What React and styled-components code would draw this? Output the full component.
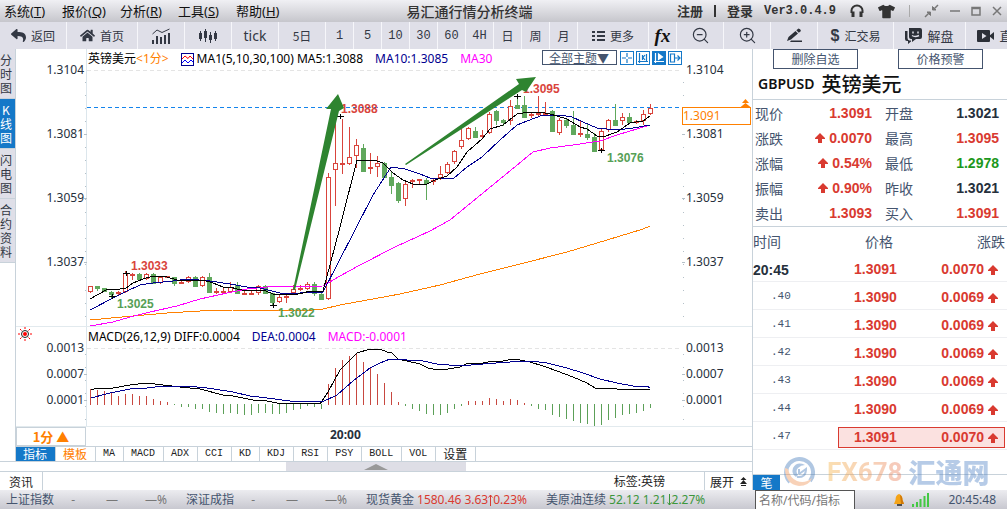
import { styled, createGlobalStyle } from "styled-components";
import { FaReply, FaHome, FaTshirt } from "react-icons/fa";
import { ZoomIn, ZoomOut } from "lucide-react";

const uiFont = `"Noto Sans", "Noto Sans CJK SC", sans-serif`;
const cnFont = `"Noto Sans CJK SC", sans-serif`;
const monoFont = `"Liberation Mono", "Noto Sans CJK SC", monospace`;
const numFont = `"Liberation Sans", "Noto Sans CJK SC", sans-serif`;

const red = "#d93a30";
const green = "#1c981c";
const dark = "#26303c";
const slate = "#44546e";
const blue = "#1478c8";
const orange = "#ff8000";
const line = "#c8d2da";

const GlobalStyle = createGlobalStyle`
  * {
    box-sizing: border-box;
  }
  body {
    margin: 0;
    background: white;
    font-family: ${uiFont};
    font-size: 12px;
    overflow: hidden;
  }
  button, select, input {
    font: inherit;
    color: inherit;
    margin: 0;
    padding: 0;
    border: 0;
    border-radius: 0;
    background: none;
  }
  button {
    cursor: pointer;
    white-space: nowrap;
  }
  svg {
    display: block;
  }
`

const Page = styled.div`
  display: flex;
  flex-direction: column;
  min-height: 100vh;
  overflow: hidden;
`

/* ---------- title bar ---------- */

const TitleBar = styled.header`
  display: grid;
  grid-template-columns: 1fr auto 1fr;
  align-items: center;
  height: 22px;
  background: linear-gradient(#f0f0f4, #c6c6cc);
`

const MenuBar = styled.nav`
  display: flex;
  padding-left: 4px;
`

const MenuButton = styled.button`
  width: 58px;
  text-align: left;
  font-size: 13px;
  line-height: 20px;
  color: #111;
`

const AppTitle = styled.h1`
  margin: 0;
  padding-right: 68px;
  font: 500 14px/20px ${cnFont};
  color: #333;
`

const TitleTools = styled.div`
  display: flex;
  justify-content: flex-end;
  align-items: center;
  gap: ${(props) => props.$gap || "0"};
  padding-right: ${(props) => props.$pad || "0"};
  color: #333;
`

const TitleButton = styled.button`
  display: flex;
  align-items: center;
  font: 700 13px/20px ${cnFont};
  color: #333;
`

const Bar = styled.span`
  width: ${(props) => props.$w || "2px"};
  height: 12px;
  background: ${(props) => props.color || "#333"};
`

const Version = styled.span`
  font: 700 12px/20px ${monoFont};
`

/* ---------- toolbar ---------- */

const Toolbar = styled.div`
  display: flex;
  height: 27px;
  background: #dfdfe8;
  overflow: hidden;
`

const ToolButton = styled.button`
  display: flex;
  flex: none;
  align-items: center;
  justify-content: center;
  gap: 5px;
  width: ${(props) => props.$w};
  border-right: 1px solid #f6f6fa;
  font-family: ${(props) => props.$font || cnFont};
  font-size: ${(props) => props.$size || "12px"};
  color: #333844;
`

const Fx = styled.span`
  font: italic 700 19px/20px "Liberation Serif", serif;
  color: #111;
`

const Dollar = styled.span`
  font: 700 16px/20px ${numFont};
`

/* ---------- body ---------- */

const Body = styled.div`
  display: flex;
  flex: 1;
`

const LeftPart = styled.div`
  display: flex;
  flex-direction: column;
  flex: 1;
  min-width: 0;
`

const Workspace = styled.div`
  display: flex;
  border-bottom: 1px solid ${line};
`

const SideTabs = styled.nav`
  display: flex;
  flex-direction: column;
  width: 16px;
  border-right: 1px solid ${line};
`

const SideTab = styled.button`
  width: 15px;
  padding: 4px 3px 3px 0;
  border-bottom: 1px solid ${line};
  font: 12px/14px ${cnFont};
  white-space: normal;
  word-break: break-all;
  color: ${(props) => (props.$active ? "white" : "#333844")};
  background: ${(props) => (props.$active ? blue : "#dfdfe8")};
`

const ChartColumn = styled.main`
  flex: 1;
  min-width: 0;
`

const Panel = styled.section`
  display: flex;
  position: relative;
  height: ${(props) => props.$h};
  border-bottom: 1px solid #e2eaee;
`

const Legend = styled.div`
  position: absolute;
  top: 0;
  left: 72px;
  right: 70px;
  display: flex;
  align-items: center;
  gap: 12px;
  height: 20px;
  line-height: 18px;
  white-space: nowrap;
`

const LegendText = styled.span`
  color: ${(props) => props.color || "black"};
`

const LegendItem = styled.span`
  display: flex;
  align-items: center;
  gap: 3px;
`

const LegendTools = styled.div`
  display: flex;
  align-items: center;
  align-self: flex-start;
  gap: 2px;
  margin-left: auto;
  padding-top: 1px;
`

const ThemeSelect = styled.select`
  appearance: none;
  width: 75px;
  height: 15px;
  margin-right: 1px;
  padding-left: 6px;
  border: 1px solid ${slate};
  background: white;
  font: 12px/13px ${cnFont};
  color: ${slate};
`

const SmallTool = styled.button`
  width: 14px;
  height: 14px;
  border: 1px solid ${blue};
  color: ${(props) => (props.$active ? "white" : blue)};
  background: ${(props) => (props.$active ? blue : "white")};
`

const Axis = styled.div`
  display: flex;
  flex: none;
  flex-direction: column;
  width: ${(props) => props.$w};
  padding-top: ${(props) => props.$top};
  text-align: ${(props) => props.$align};
  color: ${dark};
`

const AxisLabel = styled.span`
  height: ${(props) => props.$step};
  line-height: 16px;
`

const Plot = styled.svg`
  flex: 1;
  min-width: 0;
  height: 100%;
`

const SunButton = styled.button`
  position: absolute;
  left: 2px;
  top: 0;
`

const PriceFlag = styled.div`
  position: absolute;
  right: 1px;
  top: 58px;
  width: 69px;
  height: 18px;
  border: 1px solid ${orange};
  background: white;
  line-height: 16px;
  color: ${orange};
`

const FlagArrows = styled.svg`
  position: absolute;
  right: -1px;
  top: -9px;
`

const TimeRow = styled.div`
  display: flex;
  height: 19px;
`

const PeriodButton = styled.button`
  width: 70px;
  border: 1px solid ${line};
  font: 700 13px/16px ${cnFont};
  color: ${orange};
`

const TimeLabel = styled.span`
  margin-left: 242px;
  padding-left: 2px;
  font: 700 12px/16px ${uiFont};
  color: ${dark};
`

const IndicatorTabs = styled.nav`
  display: flex;
  height: 15px;
  border-top: 1px solid ${line};
`

const IndicatorTab = styled.button`
  padding: 0 8px 0 7px;
  border-right: 1px solid ${line};
  font: ${(props) => (props.$cn ? `12px/14px ${cnFont}` : `10px/14px ${monoFont}`)};
  color: ${(props) => props.color || "#222"};
  background: ${(props) => props.$bg || "white"};
`

const Splitter = styled.div`
  display: flex;
  justify-content: center;
  height: 10px;
  border-bottom: 1px solid ${line};
`

const SplitterHandle = styled.button`
  display: flex;
  align-items: center;
  justify-content: center;
  width: 180px;
  background: #dedee6;
`

const NewsRow = styled.div`
  display: flex;
  flex: 1;
  align-items: center;
  min-height: 18px;
  color: #222;
`

const NewsTab = styled.button`
  display: flex;
  align-items: center;
  justify-content: center;
  gap: 6px;
  align-self: stretch;
  width: ${(props) => props.$w};
  border: solid ${line};
  border-width: ${(props) => props.$border};
  font-family: ${cnFont};
`

const TagText = styled.span`
  margin-left: auto;
  margin-right: 39px;
`

/* ---------- right panel ---------- */

const QuotePanel = styled.aside`
  position: relative;
  display: flex;
  flex-direction: column;
  flex: none;
  width: 255px;
  border-left: 1px solid ${line};
`

const PanelButtons = styled.div`
  display: flex;
  gap: 40px;
  padding-left: 20px;
`

const PanelButton = styled.button`
  width: 85px;
  height: 20px;
  border: 1px solid ${slate};
  font: 12px/16px ${cnFont};
  color: ${slate};
`

const SymbolRow = styled.h2`
  display: flex;
  align-items: center;
  gap: 7px;
  height: 31px;
  margin: 0;
  padding-left: 5px;
  border-bottom: 1px solid ${line};
  font: 600 14px/20px ${uiFont};
  color: #111;
`

const SymbolName = styled.span`
  font: 500 20px/24px ${cnFont};
`

const QuoteGrid = styled.dl`
  display: grid;
  grid-template-columns: 40px 77px 13px 40px auto;
  grid-auto-rows: 25px;
  align-items: center;
  margin: 0;
  padding: 0 8px 1px 2px;
  border-bottom: 1px solid ${line};
`

const QuoteLabel = styled.dt`
  grid-column: ${(props) => props.$col};
  font: 14px/20px ${cnFont};
  color: ${slate};
`

const QuoteValue = styled.dd`
  grid-column: ${(props) => props.$col};
  display: flex;
  justify-content: flex-end;
  align-items: center;
  gap: 4px;
  margin: 0;
  font: 700 14px/20px ${numFont};
  color: ${(props) => props.color};
`

const TickTable = styled.table`
  width: 100%;
  border-collapse: separate;
  border-spacing: 0;
  table-layout: fixed;
`

const TickHead = styled.th`
  width: ${(props) => props.$w};
  height: 27px;
  padding: ${(props) => props.$pad};
  text-align: ${(props) => props.$align};
  font: 14px/20px ${cnFont};
  color: ${slate};
`

const TimeCell = styled.td`
  height: 28px;
  padding: ${(props) => (props.$first ? "4px 0 0 0" : "0 0 0 18px")};
  border-bottom: 1px solid #eeeff2;
  font: ${(props) => (props.$first ? `700 14px/20px ${numFont}` : `11px/16px ${monoFont}`)};
  color: ${(props) => (props.$first ? dark : slate)};
`

const TradeCell = styled.td`
  padding: 0 2px 0 0;
  border-bottom: 1px solid #eeeff2;
`

const Trade = styled.div`
  display: flex;
  align-items: center;
  justify-content: space-between;
  height: 21px;
  margin-top: 4px;
  padding: 0 6px 0 15px;
  border: 1px solid ${(props) => (props.$hot ? red : "transparent")};
  background: ${(props) => (props.$hot ? "#fbe1e0" : "transparent")};
  font: 700 14px/19px ${numFont};
  color: ${red};
`

const Change = styled.span`
  display: flex;
  align-items: center;
  gap: 4px;
`

const PanelFoot = styled.div`
  margin-top: auto;
  height: 16px;
  border-top: 1px solid ${line};
`

const PenTab = styled.button`
  display: block;
  width: 27px;
  height: 15px;
  font: 12px/14px ${cnFont};
  color: white;
  background: ${blue};
`

const Watermark = styled.div`
  position: absolute;
  left: 30px;
  bottom: 0;
  display: flex;
  align-items: center;
  gap: 12px;
  height: 36px;
  opacity: 0.4;
  pointer-events: none;
`

const BrandLatin = styled.span`
  font: 700 26px/36px Roboto, sans-serif;
  background: linear-gradient(90deg, #f5b040, #e87858);
  background-clip: text;
  color: transparent;
`

const BrandCn = styled.span`
  margin-left: -6px;
  font: 900 27px/36px ${cnFont};
  color: #4c80c4;
`

/* ---------- status bar ---------- */

const StatusBar = styled.footer`
  display: flex;
  align-items: center;
  height: 19px;
  padding-left: 6px;
  background: linear-gradient(#ececf0, #c8c8d0);
`

const Ticker = styled.div`
  display: flex;
  flex: none;
  width: 180px;
  gap: 3px;
  line-height: 18px;
  white-space: nowrap;
  color: ${(props) => props.color};
`

const TickerName = styled.span`
  color: ${slate};
`

const TickerBlank = styled.span`
  width: ${(props) => props.$w};
  text-align: right;
`

const TickerMove = styled.span`
  display: flex;
  align-items: center;
`

const SearchInput = styled.input`
  width: 100px;
  height: 19px;
  margin-left: auto;
  padding-left: 3px;
  border: solid #555;
  border-width: 1px 1px 0 1px;
  background: white;
  &::placeholder {
    color: #777;
    opacity: 1;
  }
`

const StatusRight = styled.div`
  display: flex;
  align-items: center;
  gap: 8px;
  width: 152px;
  padding: 0 11px 0 39px;
  line-height: 18px;
  color: ${slate};
`

const Clock = styled.time`
  margin-left: auto;
`

/* ---------- data ---------- */

// [high, top, bottom, low, kind] in plot pixels, u = rise, d = fall
const candles = [
  [286, 286, 292, 292, "u"], [286, 286, 288, 290, "d"], [288, 288, 291, 291, "d"], [291, 292, 294, 297, "d"],
  [291, 292, 293, 294, "u"], [271, 273, 292, 292, "u"], [273, 274, 276, 279, "u"], [273, 274, 279, 280, "d"],
  [273, 274, 279, 279, "u"], [273, 274, 283, 283, "d"], [277, 277, 283, 283, "u"], [276, 276, 277, 277, "u"],
  [277, 277, 283, 285, "d"], [280, 282, 283, 283, "u"], [276, 277, 282, 282, "u"], [276, 277, 286, 286, "d"],
  [276, 277, 286, 286, "u"], [273, 277, 292, 292, "d"], [288, 291, 292, 293, "u"], [287, 291, 292, 293, "u"],
  [282, 287, 292, 292, "u"], [282, 285, 293, 293, "d"], [291, 293, 294, 294, "u"], [291, 293, 294, 294, "u"],
  [285, 286, 293, 294, "u"], [285, 286, 293, 293, "d"], [293, 293, 302, 305, "d"], [295, 297, 302, 302, "u"],
  [293, 296, 297, 302, "u"], [285, 289, 293, 294, "u"], [285, 288, 289, 290, "u"], [282, 284, 289, 289, "u"],
  [282, 284, 293, 295, "d"], [292, 294, 299, 299, "d"], [173, 177, 299, 299, "u"], [117, 163, 170, 205, "u"],
  [119, 163, 164, 173, "u"], [127, 157, 164, 164, "u"], [139, 145, 156, 167, "u"], [144, 148, 171, 171, "d"],
  [153, 167, 168, 173, "u"], [156, 163, 167, 176, "u"], [162, 163, 177, 177, "d"], [171, 177, 185, 193, "d"],
  [182, 183, 200, 202, "d"], [181, 184, 199, 205, "u"], [179, 180, 182, 187, "u"], [179, 179, 180, 183, "u"],
  [178, 180, 183, 199, "d"], [179, 180, 182, 184, "u"], [166, 174, 178, 179, "u"], [162, 164, 173, 173, "u"],
  [150, 151, 162, 163, "u"], [129, 140, 147, 148, "u"], [127, 128, 139, 139, "u"], [127, 131, 137, 137, "d"],
  [130, 135, 136, 137, "u"], [112, 114, 133, 133, "u"], [110, 111, 120, 124, "d"], [119, 120, 122, 125, "d"],
  [100, 106, 121, 124, "u"], [95, 105, 108, 108, "d"], [96, 105, 117, 117, "d"], [112, 114, 116, 117, "u"],
  [96, 113, 114, 115, "u"], [102, 113, 114, 114, "u"], [110, 111, 131, 131, "d"], [118, 120, 133, 134, "u"],
  [118, 120, 125, 127, "d"], [111, 125, 134, 134, "d"], [121, 133, 134, 136, "u"], [123, 134, 137, 139, "d"],
  [133, 137, 151, 151, "d"], [129, 131, 150, 151, "u"], [119, 120, 130, 131, "u"], [104, 120, 125, 125, "d"],
  [113, 117, 121, 124, "u"], [113, 117, 122, 122, "d"], [120, 121, 122, 123, "u"], [110, 114, 121, 124, "u"],
  [104, 108, 114, 114, "u"],
];

// bar heights around the zero line
const macdBars = [
  16, 15, 14, 12, 9, 11, 11, 9, 9, 6, 4, 3, -1, -3, -3, -5, -5, -8, -9, -10, -9, -10, -11, -11, -9, -9, -10, -10,
  -9, -6, -5, -2, -3, -5, 21, 37, 45, 49, 52, 43, 37, 31, 22, 13, 3, -2, -5, -7, -10, -11, -11, -9, -5, -2, 4, 4,
  4, 7, 6, 4, 6, 5, 2, -2, -5, -6, -11, -13, -15, -17, -19, -20, -22, -21, -16, -14, -11, -10, -9, -7, -4,
];

const averages = [
  ["#ff8000", "90,320 133,316 167,313 200,311 233,310 313,310 323,309 340,305 400,294 440,285 480,274 520,264 567,252 607,240 643,229 650,226"],
  ["#ff00ff", "90,326 113,322 130,317 150,312 177,306 200,299 227,293 247,289 267,287 323,286 340,276 360,265 395,247 430,231 450,220 483,193 533,152 550,148 573,145 600,141 617,135 650,125"],
  ["#000090", "90,310 113,298 127,291 140,285 153,283 173,281 188,279 210,281 230,284 247,287 260,288 280,293 300,293 323,292 337,265 373,195 391,167 405,169 420,174 430,178 453,179 467,167 482,157 500,140 517,125 527,121 543,115 560,115 572,117 583,122 597,128 617,130 633,128 650,125"],
  ["#000", "90,299 106,290 120,289 126,288 133,283 143,279 153,276 167,277 177,280 203,280 213,283 223,287 230,287 237,289 247,291 258,290 266,291 273,294 293,295 303,293 310,291 323,291 330,265 340,227 357,160 377,161 383,163 393,173 403,180 413,184 427,184 435,180 447,176 457,167 467,152 482,139 490,129 503,125 517,114 530,112 540,112 550,114 567,119 580,127 587,129 597,136 603,137 617,132 630,123 643,121 650,116"],
];

const macdLines = [
  ["#000", "91,390 97,388 113,388 130,385 147,383 163,385 180,387 200,389 223,395 233,396 253,400 267,401 277,403 287,404 303,403 320,404 328,392 340,370 357,353 370,349 380,349 387,352 392,353 398,359 420,364 428,368 438,370 448,369 460,367 468,363 483,363 493,361 503,361 513,359 520,360 530,362 543,366 557,371 573,377 587,383 595,388 602,389 610,388 617,389 630,389 637,390 650,389"],
  ["#000090", "91,398 110,393 130,389 147,388 163,386 187,386 207,388 233,392 250,396 267,398 290,401 307,401 322,402 337,395 353,381 370,368 380,363 390,359 407,360 423,361 437,364 460,366 483,364 510,362 530,361 547,363 567,368 583,373 600,379 617,383 633,386 647,386 650,388"],
];

const marks = [
  [131, 270, "1.3033", "#d9443c"],
  [117, 308, "1.3025", "#56a056"],
  [278, 317, "1.3022", "#56a056"],
  [341, 113, "1.3088", "#d9443c"],
  [523, 93, "1.3095", "#d9443c"],
  [607, 162, "1.3076", "#56a056"],
];

const crosses = [[126, 273], [112, 296], [273, 305], [340, 116], [517, 96], [601, 150]];

const quotes = [
  ["现价", "1.3091", red, false, "开盘", "1.3021", dark],
  ["涨跌", "0.0070", red, true, "最高", "1.3095", red],
  ["涨幅", "0.54%", red, true, "最低", "1.2978", green],
  ["振幅", "0.90%", red, true, "昨收", "1.3021", dark],
  ["卖出", "1.3093", red, false, "买入", "1.3091", red],
];

const ticks = [
  ["20:45", "1.3091", "0.0070"],
  [".40", "1.3090", "0.0069"],
  [".41", "1.3090", "0.0069"],
  [".42", "1.3090", "0.0069"],
  [".43", "1.3090", "0.0069"],
  [".44", "1.3090", "0.0069"],
  [".47", "1.3091", "0.0070"],
];

const menus = [["系统", "T"], ["报价", "Q"], ["分析", "R"], ["工具", "S"], ["帮助", "H"]];
const periods = ["1", "5", "10", "30", "60", "4H", "日", "周", "月"];
const indicators = ["MA", "MACD", "ADX", "CCI", "KD", "KDJ", "RSI", "PSY", "BOLL", "VOL"];
const prices = ["1.3104", "1.3081", "1.3059", "1.3037"];
const macdScale = ["0.0013", "0.0007", "0.0001"];

/* ---------- icons ---------- */

const UpArrow = () => (
  <svg width="10" height="10" viewBox="0 0 10 10" fill={red}>
    <path d="M5 0L10 5V6H7V10H3V6H0V5Z" />
  </svg>
)

const ThinArrow = ({ d }) => (
  <svg width="5" height="12" viewBox="0 0 5 12" fill="none" stroke="currentColor">
    <path d={d} />
  </svg>
)

const HeadphoneIcon = () => (
  <svg width="14" height="14" viewBox="0 0 14 14" fill="none" stroke="#333" strokeWidth="2">
    <path d="M1.500 9V6.500A5.500 5 0 0 1 12.500 6.500V9" />
    <path d="M3 7.500V13M11 7.500V13" strokeWidth="3" />
  </svg>
)

const CollapseIcon = () => (
  <svg width="15" height="14" viewBox="0 0 15 14" fill="#777" stroke="#777">
    <path d="M14 1L10 5M1 13L5 9" strokeWidth="1.500" />
    <path d="M8.500 2.500V6H12ZM6.500 11.500V8H3Z" />
  </svg>
)

const WindowIcon = ({ d }) => (
  <svg width="10" height="10" viewBox="0 0 10 10" fill="none" stroke="#777" strokeWidth="1.500">
    <path d={d} />
  </svg>
)

const TrendIcon = () => (
  <svg width="20" height="16" viewBox="0 0 20 16" fill="none" stroke="#333844">
    <path d="M1.500 6L6 2L11 4.500L18.500 1" />
    <path d="M2 16V12M6 16V8M10 16V9M14 16V7M18 16V5" strokeWidth="2" />
  </svg>
)

const CandleIcon = () => (
  <svg width="20" height="16" viewBox="0 0 20 16" stroke="#333844">
    <path d="M2.500 3V13M7.500 1V14M12.500 4V15M17.500 3V13" />
    <path d="M2.500 5V11M7.500 3V10M12.500 7V12M17.500 5V11" strokeWidth="3" />
  </svg>
)

const ListIcon = () => (
  <svg width="13" height="12" viewBox="0 0 13 12" stroke="#333844" strokeWidth="2">
    <path d="M0 2H3M5 2H13M0 6H3M5 6H13M0 10H3M5 10H13" />
  </svg>
)

const PenIcon = () => (
  <svg width="17" height="15" viewBox="0 0 17 15" fill="#2c3038">
    <path d="M1 13L2.500 9L9.500 3L12 5.500L5 11.500ZM10.300 2.300L12.500 .5Q14.500 .5 15 3L12.800 4.800Z" />
    <path d="M5 12.500H16V14H4Z" />
  </svg>
)

const ChatIcon = () => (
  <svg width="17" height="16" viewBox="0 0 17 16" fill="#2c3038">
    <path d="M4 0H15Q17 0 17 2V9Q17 11 15 11H11L7 14V11H6Q4 11 4 9Z" />
    <path d="M2.500 3H0V11Q0 13 2 13H3V16L6 13.500V12.500H4.500Q2.500 12 2.500 10Z" />
    <path d="M8 3.500V5.500M13 3.500V5.500M7 7.500Q10 9.500 14 7.500" stroke="#dfdfe8" fill="none" strokeWidth="1.500" />
  </svg>
)

const VideoIcon = () => (
  <svg width="17" height="12" viewBox="0 0 17 12" fill="#2c3038">
    <rect width="13" height="12" rx="1" />
    <path d="M12 6L17 2V10Z" />
    <path d="M5 3V9L9.500 6Z" fill="#dfdfe8" />
  </svg>
)

const WaveIcon = () => (
  <svg width="13" height="13" viewBox="0 0 13 13" fill="none">
    <rect x=".5" y=".5" width="12" height="12" fill="white" stroke="#000090" />
    <path d="M1 6L4 3L7 5.500L9 3L12 6" stroke="red" />
    <path d="M1 10L4 7L7 10L10 7L12 9" stroke="blue" />
  </svg>
)

const ToolGlyph = ({ d, fill }) => (
  <svg width="12" height="12" viewBox="0 0 12 12" fill={fill || "none"} stroke="currentColor" strokeWidth="1.200">
    <path d={d} />
  </svg>
)

const SunIcon = () => (
  <svg width="14" height="14" viewBox="0 0 14 14" fill="none" stroke="red">
    <path d="M7 0V2M7 12V14M0 7H2M12 7H14M2 2L3.500 3.500M10.500 10.500L12 12M2 12L3.500 10.500M10.500 3.500L12 2" />
    <circle cx="7" cy="7" r="3.500" stroke="#222" />
    <circle cx="7" cy="7" r="2" fill="red" stroke="none" />
  </svg>
)

const BellIcon = () => (
  <svg width="10" height="12" viewBox="0 0 10 12">
    <path d="M5 0Q8.500 1 8.500 6L10 10H0L1.500 6Q1.500 1 5 0Z" fill="#f5a418" />
    <path d="M6 1Q8.500 2 8.500 6L10 10H7Z" fill="#d07808" />
    <path d="M3 11H8" stroke="#222" strokeWidth="1.500" />
  </svg>
)

const SignalIcon = () => (
  <svg width="17" height="14" viewBox="0 0 17 14" stroke="#44c844" strokeWidth="2">
    <path d="M1 14V11M5 14V9M8.500 14V6M12.500 14V3M16 14V0" />
  </svg>
)

const BrandLogo = () => (
  <svg width="32" height="32" viewBox="0 0 32 32" fill="none">
    <path d="M7 26A13.500 13.500 0 1 1 27 25" stroke="#3c74b8" strokeWidth="4" />
    <path d="M2 12Q2 28 16 30Q26 30 29 22Q22 28 14 25Q7 22 5 13Z" fill="#f09050" />
    <path d="M22 9Q14 5 10 12Q8 18 13 21L15 19Q12 15 15 12Q18 9 22 9Z" fill="#3c74b8" />
    <path d="M14 21Q23 22 23 13L16 18M16 13V18" stroke="#3c74b8" strokeWidth="2" />
  </svg>
)

/* ---------- charts ---------- */

const AxisDots = ({ from, to, x, major }) => {
  const dots = [];
  for (let y = from; y <= to; y += 13) {
    dots.push(<rect key={y} x={x} y={y} width="1" height="1" />);
  }
  return (
    <g fill="#b4c0c8">
      {dots}
      {major.map((y) => <rect key={`m${y}`} x={x - 1} y={y} width="3" height="1" />)}
    </g>
  )
}

const Candle = ({ index, data }) => {
  const [high, top, bottom, low, kind] = data;
  const x = 90 + index * 7;
  const color = kind === "u" ? "#d9443c" : "#60a85c";
  const hollow = kind === "u" && bottom - top > 1;
  return (
    <g stroke={color}>
      <path d={`M${x + 0.5} ${high}V${low + 1}`} />
      <rect
        x={x - 1.5}
        y={top + 0.5}
        width="4"
        height={Math.max(bottom - top - (hollow ? 1 : 0), 1)}
        fill={hollow ? "white" : color}
      />
    </g>
  )
}

const PriceChart = () => (
  <Plot viewBox="84 49 601 277" preserveAspectRatio="xMinYMin meet" shapeRendering="crispEdges">
    <path d="M86.500 49V327" stroke="#dce6ec" />
    <AxisDots from={82} to={320} x={85} major={[134, 198, 262]} />
    <AxisDots from={82} to={320} x={683} major={[134, 198, 262]} />
    <path d="M87 70.500H682" stroke="#e4e4e4" strokeDasharray="4 3" />
    <path d="M87 107.500H682" stroke="#1484ec" strokeDasharray="4 3" />
    {candles.map((data, index) => <Candle key={index} index={index} data={data} />)}
    {averages.map(([color, points]) => (
      <polyline key={color} points={points} fill="none" stroke={color} />
    ))}
    {crosses.map(([x, y]) => (
      <path key={x} d={`M${x - 3} ${y + 0.5}H${x + 4}M${x + 0.5} ${y - 2}V${y + 3}`} stroke="#000" />
    ))}
    {marks.map(([x, y, text, color]) => (
      <text key={text} x={x} y={y} fill={color} fontFamily="Liberation Sans" fontSize="12" fontWeight="700">
        {text}
      </text>
    ))}
    <g fill="#2e8430" shapeRendering="auto">
      <path d="M293 290L331 109L326 109L338 94L344 108L339 111L295 290Z" />
      <path d="M405 164L519 84L516 79L536 77L526 92L522 90L406 165Z" />
    </g>
  </Plot>
)

const MacdChart = () => (
  <Plot viewBox="84 327 601 99" preserveAspectRatio="xMinYMin meet" shapeRendering="crispEdges">
    <path d="M86.500 327V427" stroke="#dce6ec" />
    <AxisDots from={354} to={424} x={85} major={[374, 400]} />
    <AxisDots from={354} to={424} x={683} major={[374, 400]} />
    <path d="M87 348.500H682" stroke="#e4e4e4" strokeDasharray="4 3" />
    {macdBars.map((h, index) => (
      <path
        key={index}
        d={`M${90.5 + index * 7} ${404 + (h > 0 ? 1 : 0)}v${-h}`}
        stroke={h > 0 ? "#c84840" : "#5ca058"}
      />
    ))}
    {macdLines.map(([color, points]) => (
      <polyline key={color} points={points} fill="none" stroke={color} />
    ))}
  </Plot>
)

const Scale = ({ labels, step, ...rest }) => (
  <Axis {...rest}>
    {labels.map((label) => <AxisLabel key={label} $step={step}>{label}</AxisLabel>)}
  </Axis>
)

/* ---------- page ---------- */

const App = () => (
  <Page>
    <GlobalStyle />
    <TitleBar>
      <MenuBar>
        {menus.map(([name, key]) => (
          <MenuButton key={key}>{name}(<u>{key}</u>)</MenuButton>
        ))}
      </MenuBar>
      <AppTitle>易汇通行情分析终端</AppTitle>
      <TitleTools $gap="14px" $pad="5px">
        <TitleTools $gap="11px">
          <TitleButton>注册</TitleButton>
          <Bar />
          <TitleButton>登录</TitleButton>
          <Version>Ver3.0.4.9</Version>
        </TitleTools>
        <TitleButton aria-label="客服"><HeadphoneIcon /></TitleButton>
        <TitleButton aria-label="皮肤"><FaTshirt size={17} /></TitleButton>
        <Bar $w="1px" color="#aaa" />
        <TitleTools $gap="11px">
          <TitleButton aria-label="还原"><CollapseIcon /></TitleButton>
          <TitleButton aria-label="最小化"><WindowIcon d="M0 5H10" /></TitleButton>
          <TitleButton aria-label="最大化"><WindowIcon d="M1 1.500H9V9H1ZM1 2.500H9" /></TitleButton>
          <TitleButton aria-label="关闭"><WindowIcon d="M1 1L9 9M9 1L1 9" /></TitleButton>
        </TitleTools>
      </TitleTools>
    </TitleBar>

    <Toolbar>
      <ToolButton $w="67px"><FaReply size={15} />返回</ToolButton>
      <ToolButton $w="71px"><FaHome size={15} />首页</ToolButton>
      <ToolButton $w="47px" aria-label="分时"><TrendIcon /></ToolButton>
      <ToolButton $w="47px" aria-label="K线"><CandleIcon /></ToolButton>
      <ToolButton $w="47px" $font={uiFont} $size="14px">tick</ToolButton>
      <ToolButton $w="47px">5日</ToolButton>
      {periods.map((name) => (
        <ToolButton key={name} $w="28px" $font={monoFont} $size="12px">{name}</ToolButton>
      ))}
      <ToolButton $w="71px"><ListIcon />更多</ToolButton>
      <ToolButton $w="28px"><Fx>fx</Fx></ToolButton>
      <ToolButton $w="47px" aria-label="缩小"><ZoomOut size={19} strokeWidth={1.5} /></ToolButton>
      <ToolButton $w="47px" aria-label="放大"><ZoomIn size={19} strokeWidth={1.5} /></ToolButton>
      <ToolButton $w="47px" aria-label="画线"><PenIcon /></ToolButton>
      <ToolButton $w="76px"><Dollar>$</Dollar>汇交易</ToolButton>
      <ToolButton $w="72px" $size="13px"><ChatIcon />解盘</ToolButton>
      <ToolButton $w="72px" $size="13px"><VideoIcon />直播</ToolButton>
    </Toolbar>

    <Body>
      <LeftPart>
        <Workspace>
          <SideTabs>
            <SideTab>分时图</SideTab>
            <SideTab $active>K线图</SideTab>
            <SideTab>闪电图</SideTab>
            <SideTab>合约资料</SideTab>
          </SideTabs>
          <ChartColumn>
            <Panel $h="278px">
              <Scale labels={prices} step="64px" $w="68px" $top="13px" $align="right" />
              <PriceChart />
              <Scale labels={prices} step="64px" $w="66px" $top="13px" $align="left" />
              <Legend>
                <LegendText>英镑美元<LegendText color={orange}>&lt;1分&gt;</LegendText></LegendText>
                <LegendItem>
                  <WaveIcon />
                  <LegendText>MA1(5,10,30,100) MA5:1.3088</LegendText>
                </LegendItem>
                <LegendText color="#000090">MA10:1.3085</LegendText>
                <LegendText color="#ff00ff">MA30</LegendText>
                <LegendTools>
                  <ThemeSelect aria-label="主题">
                    <option>全部主题▼</option>
                  </ThemeSelect>
                  <SmallTool aria-label="十字光标"><ToolGlyph d="M6 1V5M6 7V11M1 6H5M7 6H11" /></SmallTool>
                  <SmallTool aria-label="左对齐"><ToolGlyph d="M2.500 1V11M1 9.500H11M9.500 2V9M5.500 3V8M8 3L6 5.500L8 8" /></SmallTool>
                  <SmallTool aria-label="播放" $active><ToolGlyph fill="currentColor" d="M2.500 1V11M1 9.500H11M5.500 2V7.500L9.500 5Z" /></SmallTool>
                  <SmallTool aria-label="右移"><ToolGlyph d="M1.500 2H5.500V10H1.500ZM6 6H11M8.500 3.500L11 6L8.500 8.500" /></SmallTool>
                </LegendTools>
              </Legend>
              <PriceFlag>
                1.3091
                <FlagArrows width="11" height="9" viewBox="0 0 11 9" fill={orange}>
                  <path d="M5.500 0L9 4H2ZM5.500 4L11 8.500H0Z" />
                </FlagArrows>
              </PriceFlag>
            </Panel>
            <Panel $h="100px">
              <SunButton aria-label="参数"><SunIcon /></SunButton>
              <Scale labels={macdScale} step="26px" $w="68px" $top="13px" $align="right" />
              <MacdChart />
              <Scale labels={macdScale} step="26px" $w="66px" $top="13px" $align="left" />
              <Legend>
                <LegendText>MACD(26,12,9) DIFF:0.0004</LegendText>
                <LegendText color="#000090">DEA:0.0004</LegendText>
                <LegendText color="#ff00ff">MACD:-0.0001</LegendText>
              </Legend>
            </Panel>
            <TimeRow>
              <PeriodButton>1分 ▲</PeriodButton>
              <TimeLabel>20:00</TimeLabel>
            </TimeRow>
            <IndicatorTabs>
              <IndicatorTab $cn color="white" $bg={blue}>指标</IndicatorTab>
              <IndicatorTab $cn color={orange}>模板</IndicatorTab>
              {indicators.map((name) => <IndicatorTab key={name}>{name}</IndicatorTab>)}
              <IndicatorTab $cn>设置</IndicatorTab>
            </IndicatorTabs>
          </ChartColumn>
        </Workspace>
        <Splitter>
          <SplitterHandle aria-label="展开资讯">
            <svg width="24" height="6" viewBox="0 0 24 6" fill="#999"><path d="M12 0L24 6H0Z" /></svg>
          </SplitterHandle>
        </Splitter>
        <NewsRow>
          <NewsTab $w="43px" $border="0 1px 0 0">资讯</NewsTab>
          <TagText>标签:英镑</TagText>
          <NewsTab $w="48px" $border="0 0 0 1px">
            展开
            <svg width="7" height="9" viewBox="0 0 7 9" fill="#222">
              <path d="M3.500 0L6.500 3H.5ZM3.500 3L7 7H0ZM1 8H6V9H1Z" />
            </svg>
          </NewsTab>
        </NewsRow>
      </LeftPart>

      <QuotePanel>
        <PanelButtons>
          <PanelButton>删除自选</PanelButton>
          <PanelButton>价格预警</PanelButton>
        </PanelButtons>
        <SymbolRow>GBPUSD<SymbolName>英镑美元</SymbolName></SymbolRow>
        <QuoteGrid>
          {quotes.map(([name, value, color, arrow, name2, value2, color2]) => [
            <QuoteLabel key={name} $col="1">{name}</QuoteLabel>,
            <QuoteValue key={`${name}-v`} $col="2" color={color}>{arrow && <UpArrow />}{value}</QuoteValue>,
            <QuoteLabel key={name2} $col="4">{name2}</QuoteLabel>,
            <QuoteValue key={`${name2}-v`} $col="5" color={color2}>{value2}</QuoteValue>,
          ])}
        </QuoteGrid>
        <TickTable>
          <thead>
            <tr>
              <TickHead $w="85px" $align="left" $pad="0">时间</TickHead>
              <TickHead $align="left" $pad="0 0 0 27px">价格</TickHead>
              <TickHead $w="60px" $align="right" $pad="0 2px 0 0">涨跌</TickHead>
            </tr>
          </thead>
          <tbody>
            {ticks.map(([time, price, change], index) => (
              <tr key={time}>
                <TimeCell $first={index === 0}>{time}</TimeCell>
                <TradeCell colSpan="2">
                  <Trade $hot={index === ticks.length - 1}>
                    <span>{price}</span>
                    <Change>{change}<UpArrow /></Change>
                  </Trade>
                </TradeCell>
              </tr>
            ))}
          </tbody>
        </TickTable>
        <PanelFoot>
          <PenTab>笔</PenTab>
        </PanelFoot>
        <Watermark>
          <BrandLogo />
          <BrandLatin>FX678</BrandLatin>
          <BrandCn>汇通网</BrandCn>
        </Watermark>
      </QuotePanel>
    </Body>

    <StatusBar>
      <Ticker color="#777">
        <TickerName>上证指数</TickerName>
        <TickerBlank $w="18px">-</TickerBlank>
        <TickerBlank $w="40px">—</TickerBlank>
        <TickerBlank $w="46px">—%</TickerBlank>
      </Ticker>
      <Ticker color="#777">
        <TickerName>深证成指</TickerName>
        <TickerBlank $w="18px">-</TickerBlank>
        <TickerBlank $w="40px">—</TickerBlank>
        <TickerBlank $w="46px">—%</TickerBlank>
      </Ticker>
      <Ticker color={red}>
        <TickerName>现货黄金</TickerName>
        <span>1580.46</span>
        <TickerMove>3.63<ThinArrow d="M2.500 12V1M.5 3.500L2.500 1L4.500 3.500" />0.23%</TickerMove>
      </Ticker>
      <Ticker color="#3c963c">
        <TickerName>美原油连续</TickerName>
        <span>52.12</span>
        <TickerMove>1.21<ThinArrow d="M2.500 0V11M.5 8.500L2.500 11L4.500 8.500" />2.27%</TickerMove>
      </Ticker>
      <SearchInput aria-label="搜索" placeholder="名称/代码/指标" />
      <StatusRight>
        <BellIcon />
        <SignalIcon />
        <Clock>20:45:48</Clock>
      </StatusRight>
    </StatusBar>
  </Page>
)

export default App;
